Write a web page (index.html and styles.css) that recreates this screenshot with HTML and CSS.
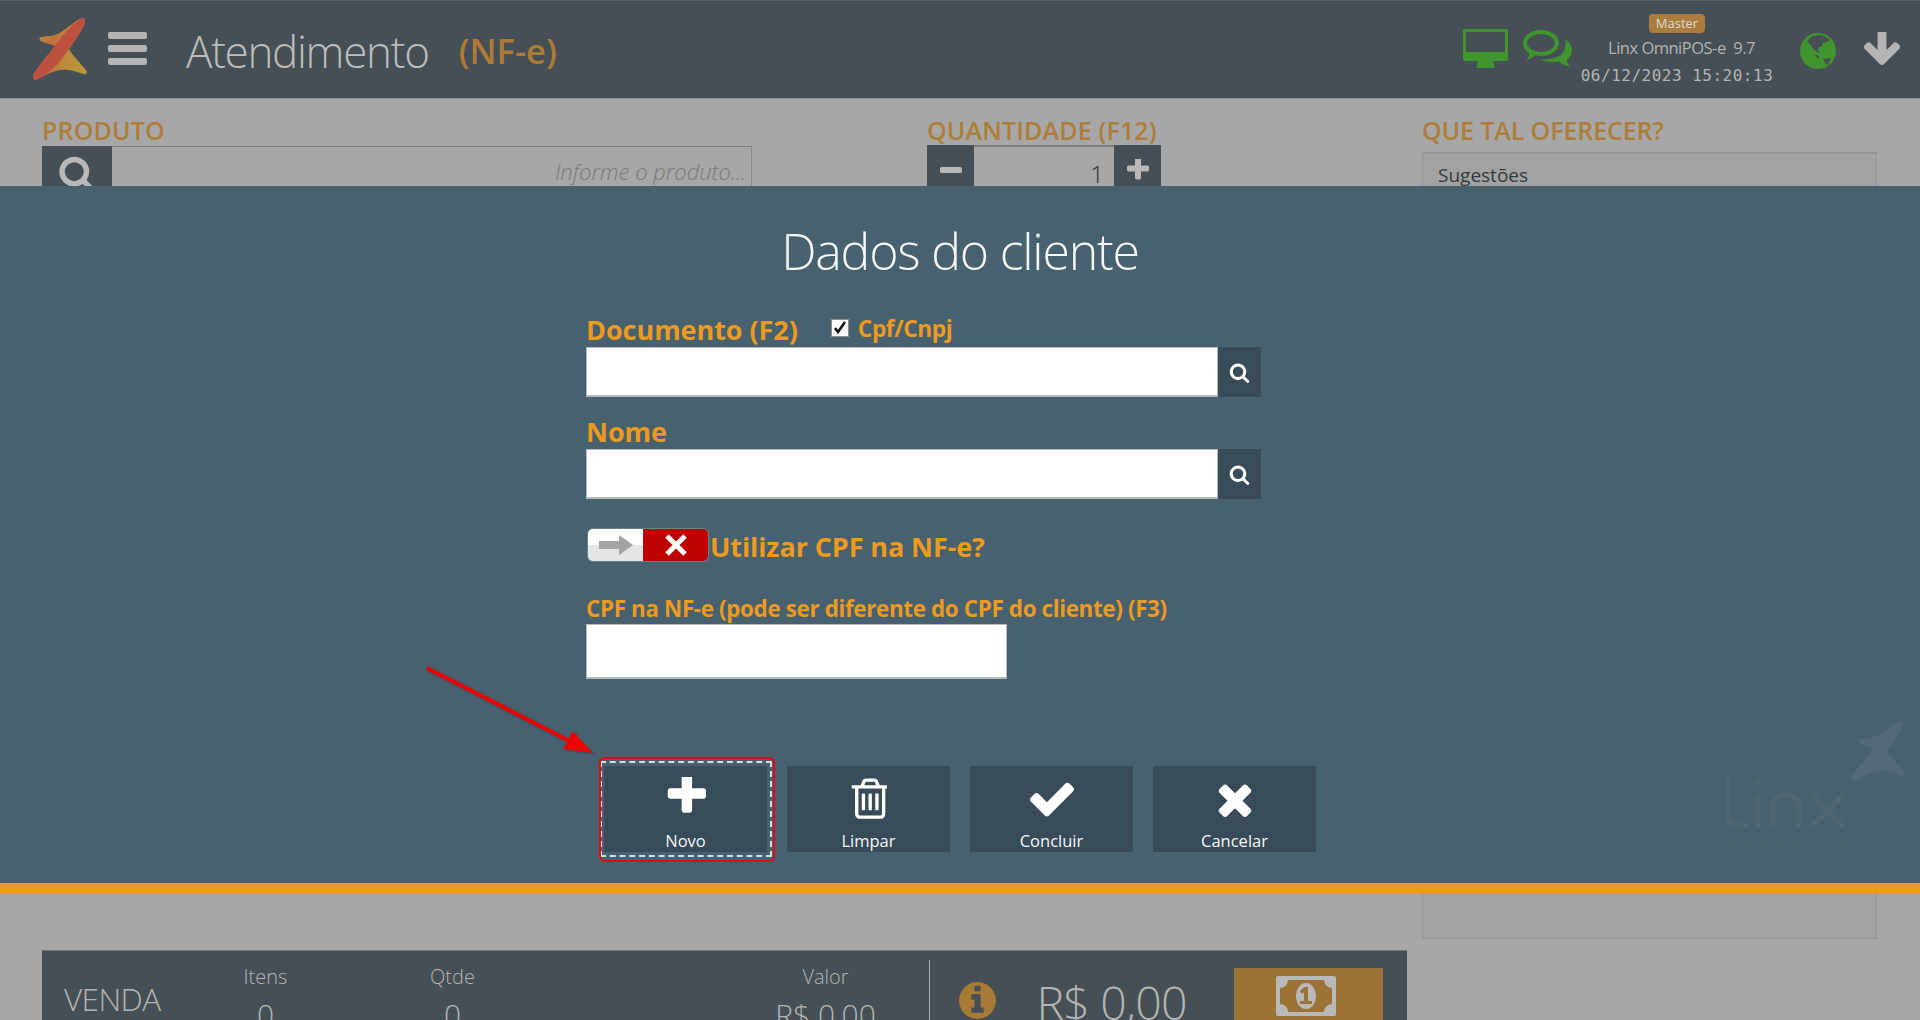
FILE: index.html
```html
<!DOCTYPE html>
<html lang="pt-BR">
<head>
<meta charset="utf-8">
<title>Atendimento (NF-e)</title>
<link rel="stylesheet" href="styles.css">
</head>
<body>
<svg class="defs" aria-hidden="true">
  <defs>
    <linearGradient id="logoGrad" x1="0" y1="0" x2="1" y2="0.25">
      <stop offset="0" stop-color="#b8933c"/>
      <stop offset="0.45" stop-color="#c0703c"/>
      <stop offset="0.7" stop-color="#bb8a3c"/>
      <stop offset="1" stop-color="#b9943a"/>
    </linearGradient>
    <symbol id="i-search" viewBox="0 0 1792 1792"><path d="M1216 832q0-185-131.5-316.5t-316.5-131.5-316.5 131.5-131.5 316.5 131.5 316.5 316.5 131.5 316.5-131.5 131.5-316.5zm512 832q0 52-38 90t-90 38q-54 0-90-38l-343-342q-179 124-399 124-143 0-273.5-55.5t-225-150-150-225-55.5-273.5 55.5-273.5 150-225 225-150 273.5-55.5 273.5 55.5 225 150 150 225 55.5 273.5q0 220-124 399l343 343q37 37 37 90z"/></symbol>
    <symbol id="i-plus" viewBox="128 224 1472 1472"><path d="M1600 736v192q0 40-28 68t-68 28h-416v416q0 40-28 68t-68 28h-192q-40 0-68-28t-28-68v-416h-416q-40 0-68-28t-28-68v-192q0-40 28-68t68-28h416v-416q0-40 28-68t68-28h192q40 0 68 28t28 68v416h416q40 0 68 28t28 68z"/></symbol>
    <symbol id="i-minus" viewBox="128 640 1472 384"><path d="M1600 736v192q0 40-28 68t-68 28h-1216q-40 0-68-28t-28-68v-192q0-40 28-68t68-28h1216q40 0 68 28t28 68z"/></symbol>
    <symbol id="i-trash" viewBox="128 160 1408 1504"><path d="M704 736v576q0 14-9 23t-23 9h-64q-14 0-23-9t-9-23v-576q0-14 9-23t23-9h64q14 0 23 9t9 23zm256 0v576q0 14-9 23t-23 9h-64q-14 0-23-9t-9-23v-576q0-14 9-23t23-9h64q14 0 23 9t9 23zm256 0v576q0 14-9 23t-23 9h-64q-14 0-23-9t-9-23v-576q0-14 9-23t23-9h64q14 0 23 9t9 23zm128 724v-948h-896v948q0 22 7 40.5t14.5 27 10.5 8.5h832q3 0 10.5-8.5t14.5-27 7-40.5zm-672-1076h448l-48-117q-7-9-17-11h-317q-10 2-17 11zm928 32v64q0 14-9 23t-23 9h-96v948q0 83-47 143.5t-113 60.5h-832q-66 0-113-58.5t-47-141.5v-952h-96q-14 0-23-9t-9-23v-64q0-14 9-23t23-9h309l70-167q15-37 54-63t79-26h320q40 0 79 26t54 63l70 167h309q14 0 23 9t9 23z"/></symbol>
    <symbol id="i-check" viewBox="121 294 1550 1228"><path d="M1671 566q0 40-28 68l-724 724-136 136q-28 28-68 28t-68-28l-136-136-362-362q-28-28-28-68t28-68l136-136q28-28 68-28t68 28l294 295 656-657q28-28 68-28t68 28l136 136q28 28 28 68z"/></symbol>
    <symbol id="i-times" viewBox="302 238 1188 1316"><path d="M1490 1322q0 40-28 68l-136 136q-28 28-68 28t-68-28l-294-294-294 294q-28 28-68 28t-68-28l-136-136q-28-28-28-68t28-68l294-294-294-294q-28-28-28-68t28-68l136-136q28-28 68-28t68 28l294 294 294-294q28-28 68-28t68 28l136 136q28 28 28 68t-28 68l-294 294 294 294q28 28 28 68z"/></symbol>
    <symbol id="i-info" viewBox="128 128 1536 1536"><path d="M1152 1376v-160q0-14-9-23t-23-9h-96v-512q0-14-9-23t-23-9h-320q-14 0-23 9t-9 23v160q0 14 9 23t23 9h96v320h-96q-14 0-23 9t-9 23v160q0 14 9 23t23 9h448q14 0 23-9t9-23zm-128-896v-160q0-14-9-23t-23-9h-192q-14 0-23 9t-9 23v160q0 14 9 23t23 9h192q14 0 23-9t9-23zm640 416q0 209-103 385.5t-279.5 279.5-385.5 103-385.5-103-279.5-279.5-103-385.5 103-385.5 279.5-279.5 385.5-103 385.5 103 279.5 279.5 103 385.5z"/></symbol>
    <symbol id="i-money" viewBox="0 256 1920 1280"><path d="M768 1152h384v-96h-128v-448h-114l-148 137 77 80 57-51v282h-128v96zm512-256q0 70-21 142t-59.5 134-101.5 101.5-138 39.5-138-39.5-101.5-101.5-59.5-134-21-142 21-142 59.5-134 101.5-101.5 138-39.5 138 39.5 101.5 101.5 59.5 134 21 142zm512 256v-512q-106 0-181-75t-75-181h-1152q0 106-75 181t-181 75v512q106 0 181 75t75 181h1152q0-106 75-181t181-75zm128-832v1152q0 26-19 45t-45 19h-1792q-26 0-45-19t-19-45v-1152q0-26 19-45t45-19h1792q26 0 45 19t19 45z"/></symbol>
    <symbol id="i-down" viewBox="117 224 1558 1348"><path d="M1675 832q0 53-37 90l-651 652q-39 37-91 37-53 0-90-37l-651-652q-38-36-38-90 0-53 38-91l74-75q39-37 91-37 53 0 90 37l294 294v-704q0-52 38-90t90-38h128q52 0 90 38t38 90v704l294-294q37-37 90-37 52 0 91 37l75 75q37 39 37 91z"/></symbol>
  </defs>
</svg>

<div class="page">
  <header class="topbar">
    <svg class="logo" viewBox="0 0 54 62"><path fill="url(#logoGrad)" d="M50 0c2 0 3 3 1 7C46 17 40 25 36 31c4 7 11 14 17 21 2 3 0 5-3 4-8-3-14-5-22-4-9 1-17 6-23 9-4 2-6-1-4-5 5-9 14-19 21-28-4-2-11-3-14-5-2-1-2-3 0-4 6-1 15-1 20-5C35 10 44 1 50 0z"/><path fill="#bd5140" d="M50 0c2 0 3 3 1 7C44 20 36 31 28 42 20 51 12 57 5 61c-4 2-6-1-4-5 5-9 14-19 21-28C30 17 42 2 50 0z"/></svg>
    <button class="burger" type="button" aria-label="Menu"><span></span><span></span><span></span></button>
    <h1 class="page-title">Atendimento</h1>
    <span class="page-mode">(NF-e)</span>
    <div class="status">
      <svg class="status-monitor" viewBox="0 0 45 39"><path fill-rule="evenodd" d="M2 0h41a2 2 0 0 1 2 2v28a2 2 0 0 1-2 2H30l1 5 1 2H13l1-2 1-5H2a2 2 0 0 1-2-2V2a2 2 0 0 1 2-2zm1 3v20h39V3z"/></svg>
      <svg class="status-chat" viewBox="0 0 50 40"><path fill-rule="evenodd" d="M19 1c10 0 18 6 18 13s-8 13-18 13c-2 0-4-.2-6-.7-2 2-5 4-9 5 2-2 3-4 3.500-7C3 22 1 18 1 14 1 7 9 1 19 1zM19 5C12 5 5 9 5 14s7 9 14 9 14-4 14-9S26 5 19 5z"/><path d="M43 10c4 2.500 7 6.500 7 11 0 4-2 7-5 10 0 2 1 5 3 7-4-1-8-3-11-5.500-2 .5-4 .5-6 .5-5 0-9-1-13-3 10 1 20-1 24-8 2-4 2-8 1-12z"/></svg>
      <div class="status-info">
        <span class="badge">Master</span>
        <span class="status-version">Linx OmniPOS-e&nbsp; 9.7</span>
        <span class="status-date">06/12/2023 15:20:13</span>
      </div>
      <svg class="status-globe" viewBox="0 0 36 36"><circle cx="18" cy="18" r="18" fill="#41952f"/><path fill="#454f55" d="M13 3l8-1 5 2 4 3-3 2-4 1-1 3-3 1-1 3 2 3-3-1-4-3-3-5-3-2 2-3 3-3zM23 26l8-1-3 7-2-1zM15 21l4 2v3l-3-2z"/></svg>
      <svg class="status-down"><use href="#i-down"/></svg>
    </div>
  </header>

  <main class="sale">
    <div class="sale-left">
      <div class="entry-row">
        <section class="product">
          <h2 class="field-title">PRODUTO</h2>
          <div class="product-box">
            <span class="product-btn"><svg class="product-icon"><use href="#i-search"/></svg></span>
            <span class="product-input">Informe o produto...</span>
          </div>
        </section>
        <section class="quantity">
          <h2 class="field-title">QUANTIDADE (F12)</h2>
          <div class="qty-box">
            <span class="qty-btn"><svg class="qty-minus"><use href="#i-minus"/></svg></span>
            <span class="qty-input">1</span>
            <span class="qty-btn"><svg class="qty-plus"><use href="#i-plus"/></svg></span>
          </div>
        </section>
      </div>
      <section class="totals">
        <div class="totals-name">VENDA</div>
        <div class="total-col total-items"><span>Itens</span><b>0</b></div>
        <div class="total-col total-qty"><span>Qtde</span><b>0</b></div>
        <div class="total-col total-value"><span>Valor</span><b>R$ 0,00</b></div>
        <div class="totals-sep"></div>
        <svg class="totals-info"><use href="#i-info"/></svg>
        <div class="totals-sum">R$ 0,00</div>
        <div class="pay-btn"><svg class="pay-icon"><use href="#i-money"/></svg></div>
      </section>
    </div>
    <aside class="offer">
      <h2 class="field-title offer-title">QUE TAL OFERECER?</h2>
      <div class="offer-box">Sugestões</div>
    </aside>
  </main>
</div>

<section class="modal">
  <div class="watermark">
    <svg class="wm-mark" viewBox="0 0 54 62"><path d="M50 0c2 0 3 3 1 7C46 17 40 25 36 31c4 7 11 14 17 21 2 3 0 5-3 4-8-3-14-5-22-4-9 1-17 6-23 9-4 2-6-1-4-5 5-9 14-19 21-28-4-2-11-3-14-5-2-1-2-3 0-4 6-1 15-1 20-5C35 10 44 1 50 0z"/></svg>
    <svg class="wm-word" viewBox="0 0 120 50"><g fill="none" stroke-width="5" stroke-linecap="round"><path d="M3 3v36c0 5 3 8 8 8h10"/><path d="M33 18v29"/><path d="M48 47V28c0-7 5-11 13-11s13 4 13 11v19"/><path d="M88 18l29 29M117 18L88 47"/></g><circle cx="33" cy="4" r="3"/></svg>
    <span class="wm-tag">SOFTWARE QUE MOVE O VAREJO</span>
  </div>

  <h2 class="modal-title">Dados do cliente</h2>

  <form class="client-form">
    <div class="label-row">
      <label class="form-label">Documento (F2)</label>
      <span class="check-box"><svg viewBox="0 0 16 16"><path d="M3 8l3 4 7-10" fill="none" stroke="#111" stroke-width="2.500"/></svg></span>
      <span class="check-label">Cpf/Cnpj</span>
    </div>
    <div class="input-group">
      <span class="text-field"></span>
      <span class="field-btn"><svg class="field-icon"><use href="#i-search"/></svg></span>
    </div>

    <label class="form-label name-label">Nome</label>
    <div class="input-group">
      <span class="text-field"></span>
      <span class="field-btn"><svg class="field-icon"><use href="#i-search"/></svg></span>
    </div>

    <div class="toggle-row">
      <span class="toggle">
        <span class="toggle-knob"><svg viewBox="0 0 34 20"><path d="M0 6h20V0l14 10-14 10v-6H0z" fill="#a3a3a3"/></svg></span>
        <span class="toggle-off"><svg viewBox="0 0 24 24"><path d="M3 3l18 18M21 3L3 21" stroke="#fff" stroke-width="5" fill="none"/></svg></span>
      </span>
      <span class="toggle-label">Utilizar CPF na NF-e?</span>
    </div>

    <label class="cpf-label">CPF na NF-e (pode ser diferente do CPF do cliente) (F3)</label>
    <span class="text-field cpf-field"></span>
  </form>

  <div class="actions">
    <button class="action action-focus" type="button"><svg class="action-icon icon-plus"><use href="#i-plus"/></svg><span>Novo</span></button>
    <button class="action" type="button"><svg class="action-icon icon-trash"><use href="#i-trash"/></svg><span>Limpar</span></button>
    <button class="action" type="button"><svg class="action-icon icon-check"><use href="#i-check"/></svg><span>Concluir</span></button>
    <button class="action" type="button"><svg class="action-icon icon-times"><use href="#i-times"/></svg><span>Cancelar</span></button>
  </div>

  <svg class="callout" viewBox="0 0 166 85"><path d="M.9-1.800 141.900 70.400 145.600 63.300 166 85 136.400 81.100 140.100 74-.9 1.800z" fill="#f00000"/></svg>
</section>
```

FILE: styles.css
```css
* { box-sizing: border-box; }

html, body {
  margin: 0;
  height: 100%;
  overflow: hidden;
}

body {
  background: #a7a7a7;
  font-family: "Open Sans", "Liberation Sans", sans-serif;
  position: relative;
}

.defs { width: 0; height: 0; position: absolute; }

h1, h2 { margin: 0; font-weight: inherit; font-size: inherit; }

/* ---- dimmed application behind the modal ---- */
.page { height: 1020px; overflow: hidden; display: flex; flex-direction: column; }

.topbar {
  height: 99px;
  flex: none;
  display: flex;
  align-items: center;
  background: #454f55;
  border-top: 1px solid #566269;
  border-bottom: 1px solid #8a8e90;
  padding: 2px 20px 0 33px;
}

.logo { width: 54px; height: 62px; flex: none; margin-top: -3px; }

.burger {
  width: 39px;
  height: 33px;
  margin: -4px 0 0 21px;
  padding: 0;
  border: 0;
  background: none;
  display: flex;
  flex-direction: column;
  justify-content: space-between;
}
.burger span { display: block; height: 7px; border-radius: 2px; background: #b4b4b4; }

.page-title {
  margin-left: 39px;
  color: #bcbcbc;
  font-size: 44px;
  font-weight: 300;
  letter-spacing: -1.300px;
}

.page-mode {
  margin-left: 30px;
  color: #ae7b37;
  font-size: 34.500px;
  font-weight: 600;
}

.status { margin-left: auto; display: flex; align-items: center; }

.status-monitor { width: 45px; height: 39px; fill: #41952f; margin: -4px 14px 0 0; }
.status-chat { width: 50px; height: 40px; fill: #41952f; margin-top: -3px; }

.status-info {
  width: 212px;
  margin: 2px 0 0 -1px;
  display: flex;
  flex-direction: column;
  align-items: center;
  color: #b4b4b4;
}

.badge {
  height: 19px;
  padding: 0 7px;
  border-radius: 4px;
  background: #aa7d3c;
  color: #dcdcdc;
  font-size: 13px;
  line-height: 19px;
}

.status-version { margin: 2px 0 0 9px; font-size: 16.500px; line-height: 26px; letter-spacing: -.5px; }

.status-date {
  margin-top: 2px;
  font-family: "DejaVu Sans Mono", monospace;
  font-size: 16px;
  line-height: 26px;
  letter-spacing: .5px;
}

.status-globe { width: 36px; height: 36px; margin: 0 0 0 17px; }
.status-down { width: 36px; height: 33px; margin: -4px 0 0 28px; fill: #b4b4b4; }

.sale {
  flex: none;
  display: flex;
  padding: 0 43px 0 42px;
}

.sale-left { width: 1365px; flex: none; }

.entry-row { height: 851px; display: flex; padding-top: 16px; }

.field-title {
  margin-bottom: 1px;
  color: #ad7d3a;
  font-size: 25px;
  font-weight: 600;
  line-height: 30px;
  letter-spacing: .15px;
  white-space: nowrap;
}

.product { width: 885px; flex: none; }
.product-box { display: flex; height: 60px; }
.product-btn { width: 70px; background: #454f55; display: flex; justify-content: center; padding-top: 8px; }
.product-icon { width: 38px; height: 38px; fill: #b8b8b8; }
.product-input {
  width: 640px;
  border-top: 1px solid #7d7d7d;
  border-right: 1px solid #8a8a8a;
  padding: 9px 5px 0 0;
  color: #7a7a7a;
  font-size: 22px;
  font-style: italic;
  font-weight: 300;
  text-align: right;
}

.qty-box { display: flex; height: 60px; margin-top: -1px; width: 234px; }
.qty-btn { width: 47px; background: #454f55; display: flex; justify-content: center; padding-top: 14px; }
.qty-minus { width: 23px; height: 6px; margin-top: 8px; fill: #b8b8b8; }
.qty-plus { width: 23px; height: 23px; fill: #b8b8b8; }
.qty-input {
  width: 140px;
  border-top: 2px solid #7d7d7d;
  padding: 10px 10px 0 0;
  text-align: right;
  font-size: 24px;
  font-weight: 300;
  color: #2e2e2e;
}

.totals {
  height: 130px;
  background: #454f55;
  border-top: 1px solid #6f7679;
  display: flex;
  align-items: flex-start;
  color: #b4b4b4;
}

.totals-name { margin: 28px 0 0 22px; font-size: 31.500px; line-height: 40px; font-weight: 300; width: 130px; letter-spacing: -.6px; }

.total-col { display: flex; flex-direction: column; align-items: center; text-align: center; }
.total-col span { margin-top: 12px; font-size: 20px; line-height: 28px; font-weight: 300; }
.total-col b { margin-top: 7px; font-size: 30px; line-height: 34px; font-weight: 300; }
.total-items { width: 100px; margin-left: 21.500px; }
.total-qty { width: 100px; margin-left: 87px; }
.total-value { width: 140px; margin-left: 253px; }

.totals-sep { width: 1px; height: 120px; margin: 9px 0 0 33.500px; background: #a9adaf; }
.totals-info { width: 37px; height: 37px; margin: 31px 0 0 29px; fill: #a87a38; flex: none; }
.totals-sum { margin: 21px 0 0 40.500px; width: 160px; font-size: 46.500px; line-height: 60px; font-weight: 300; letter-spacing: -.8px; white-space: nowrap; }
.pay-btn { width: 149px; height: 112px; margin: 17px 0 0 37.500px; background: #9c7336; display: flex; justify-content: center; padding: 8px 5px 0 0; }
.pay-icon { width: 60px; height: 40px; fill: #b9b9b9; }

.offer { width: 456px; margin-left: 15px; padding-top: 16px; }
.offer-box {
  height: 787px;
  margin-top: 7px;
  padding: 8px 15px;
  border: 1px solid #94949c;
  border-top-width: 2px;
  background: #a2a2a2;
  color: #333a40;
  font-size: 19px;
  line-height: 26px;
}
.offer-title { letter-spacing: -.1px; }

/* ---- modal ---- */
.modal {
  position: absolute;
  left: 0;
  right: 0;
  top: 186px;
  height: 708px;
  background: #47616e;
  border-bottom: 11px solid #ec9a20;
  color: #ec9a20;
  padding-left: 586px;
}

.modal-title {
  margin: 30px 0 0 -586px;
  color: #f4f6f7;
  font-size: 50px;
  font-weight: 300;
  line-height: 70px;
  text-align: center;
  letter-spacing: -1.200px;
}

.client-form { display: flex; flex-direction: column; align-items: flex-start; margin-top: 22px; }

.label-row { display: flex; align-items: center; height: 39px; }

.form-label { margin-top: 4px; font-size: 27px; font-weight: 700; line-height: 35px; letter-spacing: -.05px; }
.name-label { margin-top: 17px; }

.check-box {
  width: 18px;
  height: 18px;
  margin: 0 0 0 33px;
  background: #fff;
  border: 1px solid #8d8d8d;
  display: flex;
}
.check-label { margin: 1px 0 0 9px; font-size: 22.700px; font-weight: 700; letter-spacing: -.4px; }

.input-group { display: flex; height: 50px; width: 675px; }
.text-field { display: block; width: 632px; height: 50px; background: #fff; border: 2px solid #b4b9bd; border-width: 1px 1px 2px 1px; }
.field-btn { flex: 1; background: #374c58; display: flex; align-items: center; justify-content: center; }
.field-icon { width: 21px; height: 21px; fill: #fff; }

.toggle-row { display: flex; align-items: center; margin-top: 29px; height: 34px; padding-left: 1px; }
.toggle {
  width: 122px;
  height: 34px;
  display: flex;
  padding: 1px;
  border-radius: 6px;
  background: #6d7f89;
  overflow: hidden;
}
.toggle-knob {
  width: 55px;
  display: flex;
  align-items: center;
  justify-content: center;
  border-radius: 5px 0 0 5px;
  background: linear-gradient(#fdfdfd 0 50%, #e6e6e6 50% 100%);
}
.toggle-knob svg { width: 34px; height: 20px; }
.toggle-off {
  flex: 1;
  display: flex;
  align-items: center;
  justify-content: center;
  border-radius: 0 5px 5px 0;
  background: #be0000;
}
.toggle-off svg { width: 24px; height: 24px; }
.toggle-label { margin: 4px 0 0 1px; font-size: 27px; font-weight: 700; line-height: 34px; letter-spacing: -.1px; }

.cpf-label { margin-top: 32px; font-size: 22.400px; font-weight: 700; line-height: 30px; letter-spacing: -.35px; }
.cpf-field { width: 421px; height: 55px; }

.actions { display: flex; gap: 20px; margin: 87px 0 0 18px; }

.action {
  width: 163px;
  height: 86px;
  padding: 10px 0 0;
  border: 0;
  background: #374c58;
  color: #f4f6f7;
  display: flex;
  flex-direction: column;
  align-items: center;
  font-family: inherit;
  font-size: 16.500px;
  line-height: 22px;
}
.action span { margin-top: auto; }
.action-icon { fill: #fff; flex: none; }
.icon-plus { width: 40px; height: 40px; margin-top: 1px; }
.icon-trash { width: 37px; height: 46px; }
.icon-check { width: 44px; height: 36px; margin-top: 5px; }
.icon-times { width: 34px; height: 36px; margin-top: 5px; }

.action-focus { position: relative; }
.action-focus::before {
  content: "";
  position: absolute;
  inset: -5px -5px -5px -4px;
  border: 2px dashed #d7dde0;
}
.action-focus::after {
  content: "";
  position: absolute;
  inset: -9px -8px -10px -5px;
  border: 2px solid #e40a14;
  border-radius: 6px;
}

.callout {
  position: absolute;
  left: 427px;
  top: 482px;
  width: 166px;
  height: 85px;
  overflow: visible;
  filter: drop-shadow(1px 1px 1px rgba(0, 0, 0, .25));
}

.watermark {
  position: absolute;
  left: 1725px;
  top: 534px;
  width: 190px;
  height: 130px;
  color: #4f6672;
}
.wm-mark { position: absolute; left: 127px; top: 0; width: 53px; height: 62px; fill: #536977; }
.wm-word { position: absolute; left: 0; top: 58px; width: 120px; height: 50px; stroke: #4f6672; fill: #4f6672; }
.wm-tag { position: absolute; left: 0; top: 118px; width: 125px; font-size: 8.500px; line-height: 12px; white-space: nowrap; }
```
